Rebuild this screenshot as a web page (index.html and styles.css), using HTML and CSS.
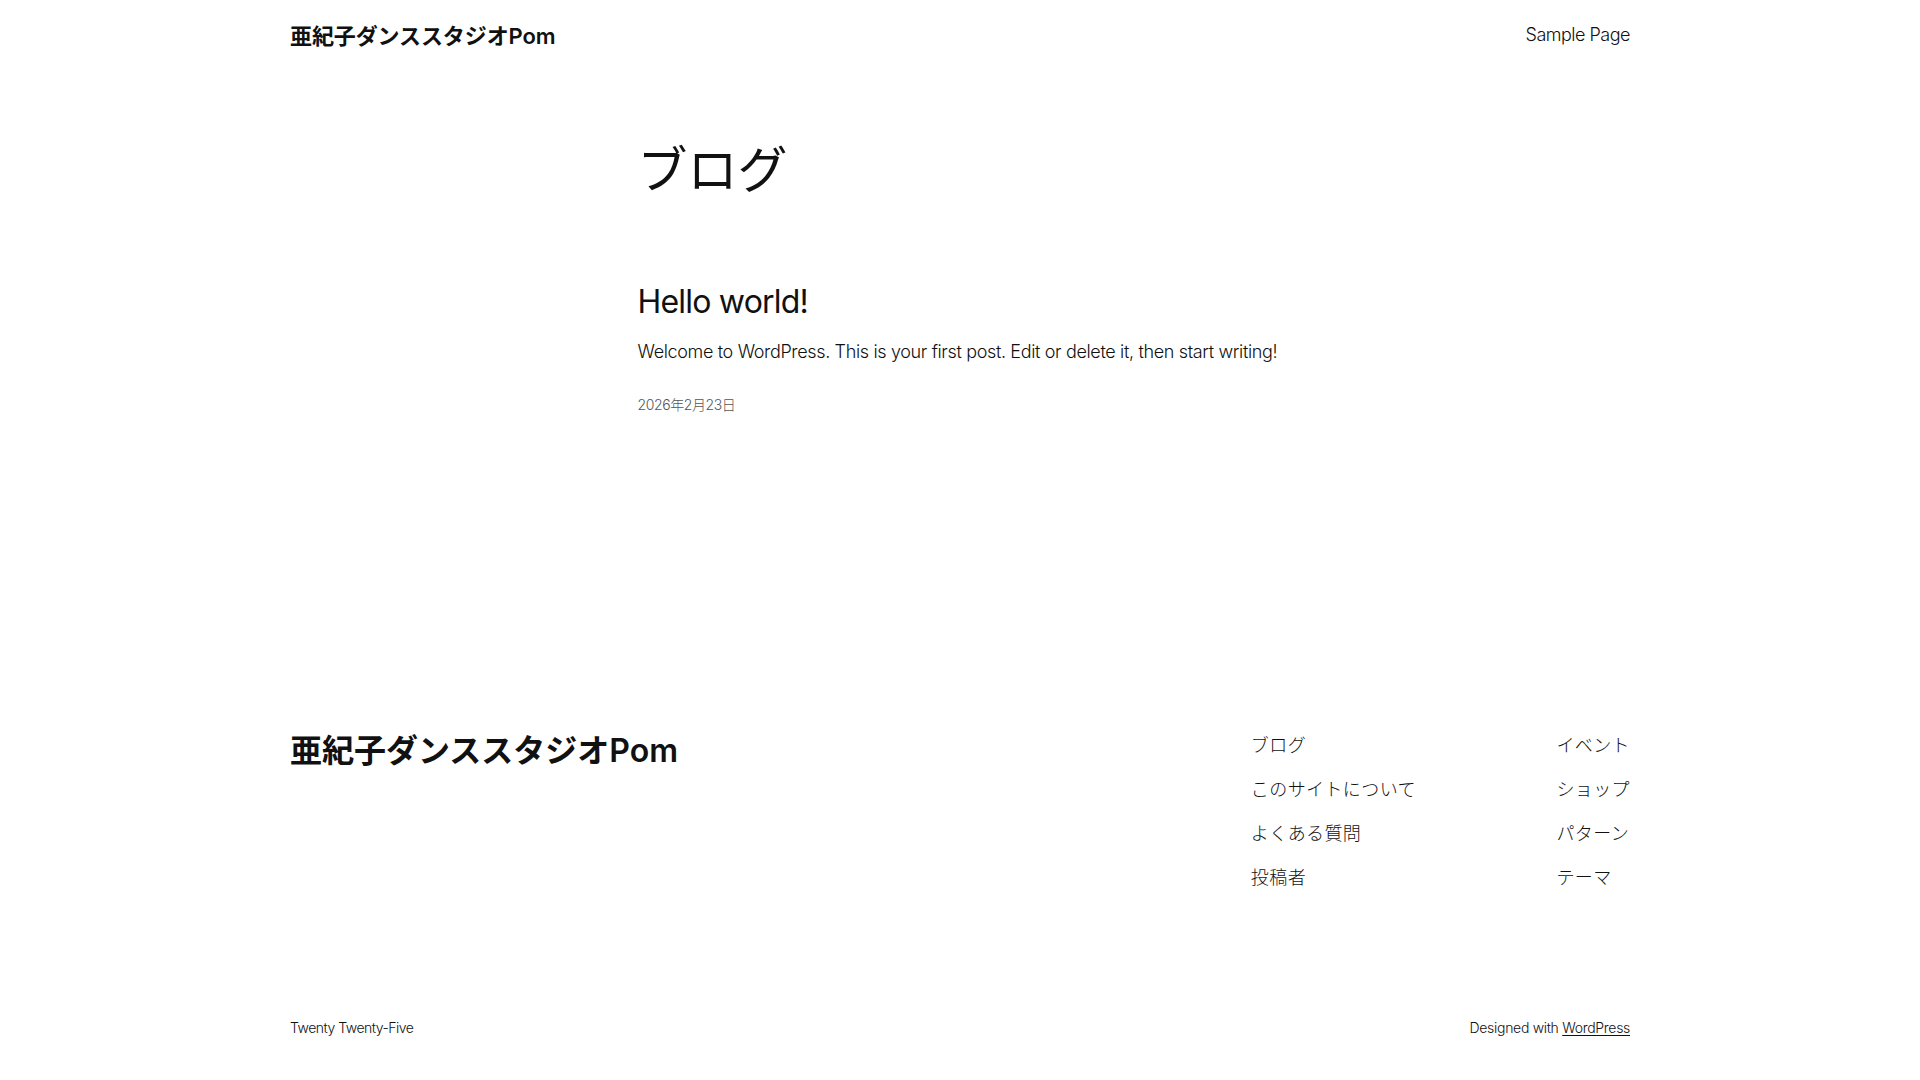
FILE: index.html
```html
<!DOCTYPE html>
<html lang="ja">
<head>
  <meta charset="UTF-8">
  <title>ブログ – 亜紀子ダンススタジオPom</title>
  <link rel="stylesheet" href="styles.css">
</head>
<body>
  <header class="site-header">
    <a class="site-title" href="#">亜紀子ダンススタジオPom</a>
    <nav class="header-nav"><a href="#">Sample Page</a></nav>
  </header>

  <main class="site-main">
    <h1 class="query-title">ブログ</h1>

    <article class="post">
      <h2 class="post-title"><a href="#">Hello world!</a></h2>
      <p class="post-excerpt">Welcome to WordPress. This is your first post. Edit or delete it, then start writing!</p>
      <time class="post-date" datetime="2026-02-23">2026年2月23日</time>
    </article>
  </main>

  <footer class="site-footer">
    <div class="footer-top">
      <a class="footer-title" href="#">亜紀子ダンススタジオPom</a>
      <div class="footer-navs">
        <ul class="footer-nav">
          <li><a href="#">ブログ</a></li>
          <li><a href="#">このサイトについて</a></li>
          <li><a href="#">よくある質問</a></li>
          <li><a href="#">投稿者</a></li>
        </ul>
        <ul class="footer-nav">
          <li><a href="#">イベント</a></li>
          <li><a href="#">ショップ</a></li>
          <li><a href="#">パターン</a></li>
          <li><a href="#">テーマ</a></li>
        </ul>
      </div>
    </div>
    <div class="footer-bottom">
      <span>Twenty Twenty-Five</span>
      <span>Designed with <a class="underline" href="#">WordPress</a></span>
    </div>
  </footer>
</body>
</html>
```

FILE: styles.css
```css
body { margin: 0; background: #fff; color: #111; font-family: Inter, "Noto Sans CJK JP", sans-serif; font-weight: 300; }
a { color: inherit; text-decoration: none; }

.site-header, .site-footer { width: 1340px; margin: 0 auto; }
.site-header { height: 68px; display: flex; align-items: center; justify-content: space-between; }
.site-title { font-size: 22px; font-weight: 600; letter-spacing: -0.1px; }
.header-nav { font-size: 18px; letter-spacing: -0.5px; }

.site-main { width: 645px; margin: 72px auto 0; }
.query-title { margin: 0; font-size: 50px; line-height: 1.2; font-weight: 400; }
.post { margin-top: 83px; }
.post-title { margin: 0; font-size: 32px; line-height: 1.2; font-weight: 400; letter-spacing: -0.8px; }
.post-excerpt { margin: 17px 0 0; font-size: 18px; line-height: 1.6; letter-spacing: -0.35px; }
.post-date { display: block; margin-top: 28px; font-size: 14px; line-height: 1.4; color: #555; letter-spacing: -0.4px; }

.site-footer { margin-top: 317px; }
.footer-top { display: flex; justify-content: space-between; align-items: flex-start; }
.footer-title { font-size: 32px; line-height: 1.2; font-weight: 600; letter-spacing: 0; }
.footer-navs { display: flex; gap: 140.5px; margin-top: 1px; }
.footer-nav { list-style: none; margin: 0; padding: 0; display: flex; flex-direction: column; gap: 19px; font-size: 18px; line-height: 1.4; letter-spacing: 0.4px; }
.footer-bottom { display: flex; justify-content: space-between; margin-top: 127px; font-size: 14px; line-height: 1.4; letter-spacing: -0.3px; }
.footer-bottom span:first-child { letter-spacing: -0.5px; }
.underline { text-decoration: underline; text-underline-offset: 2px; }
```
